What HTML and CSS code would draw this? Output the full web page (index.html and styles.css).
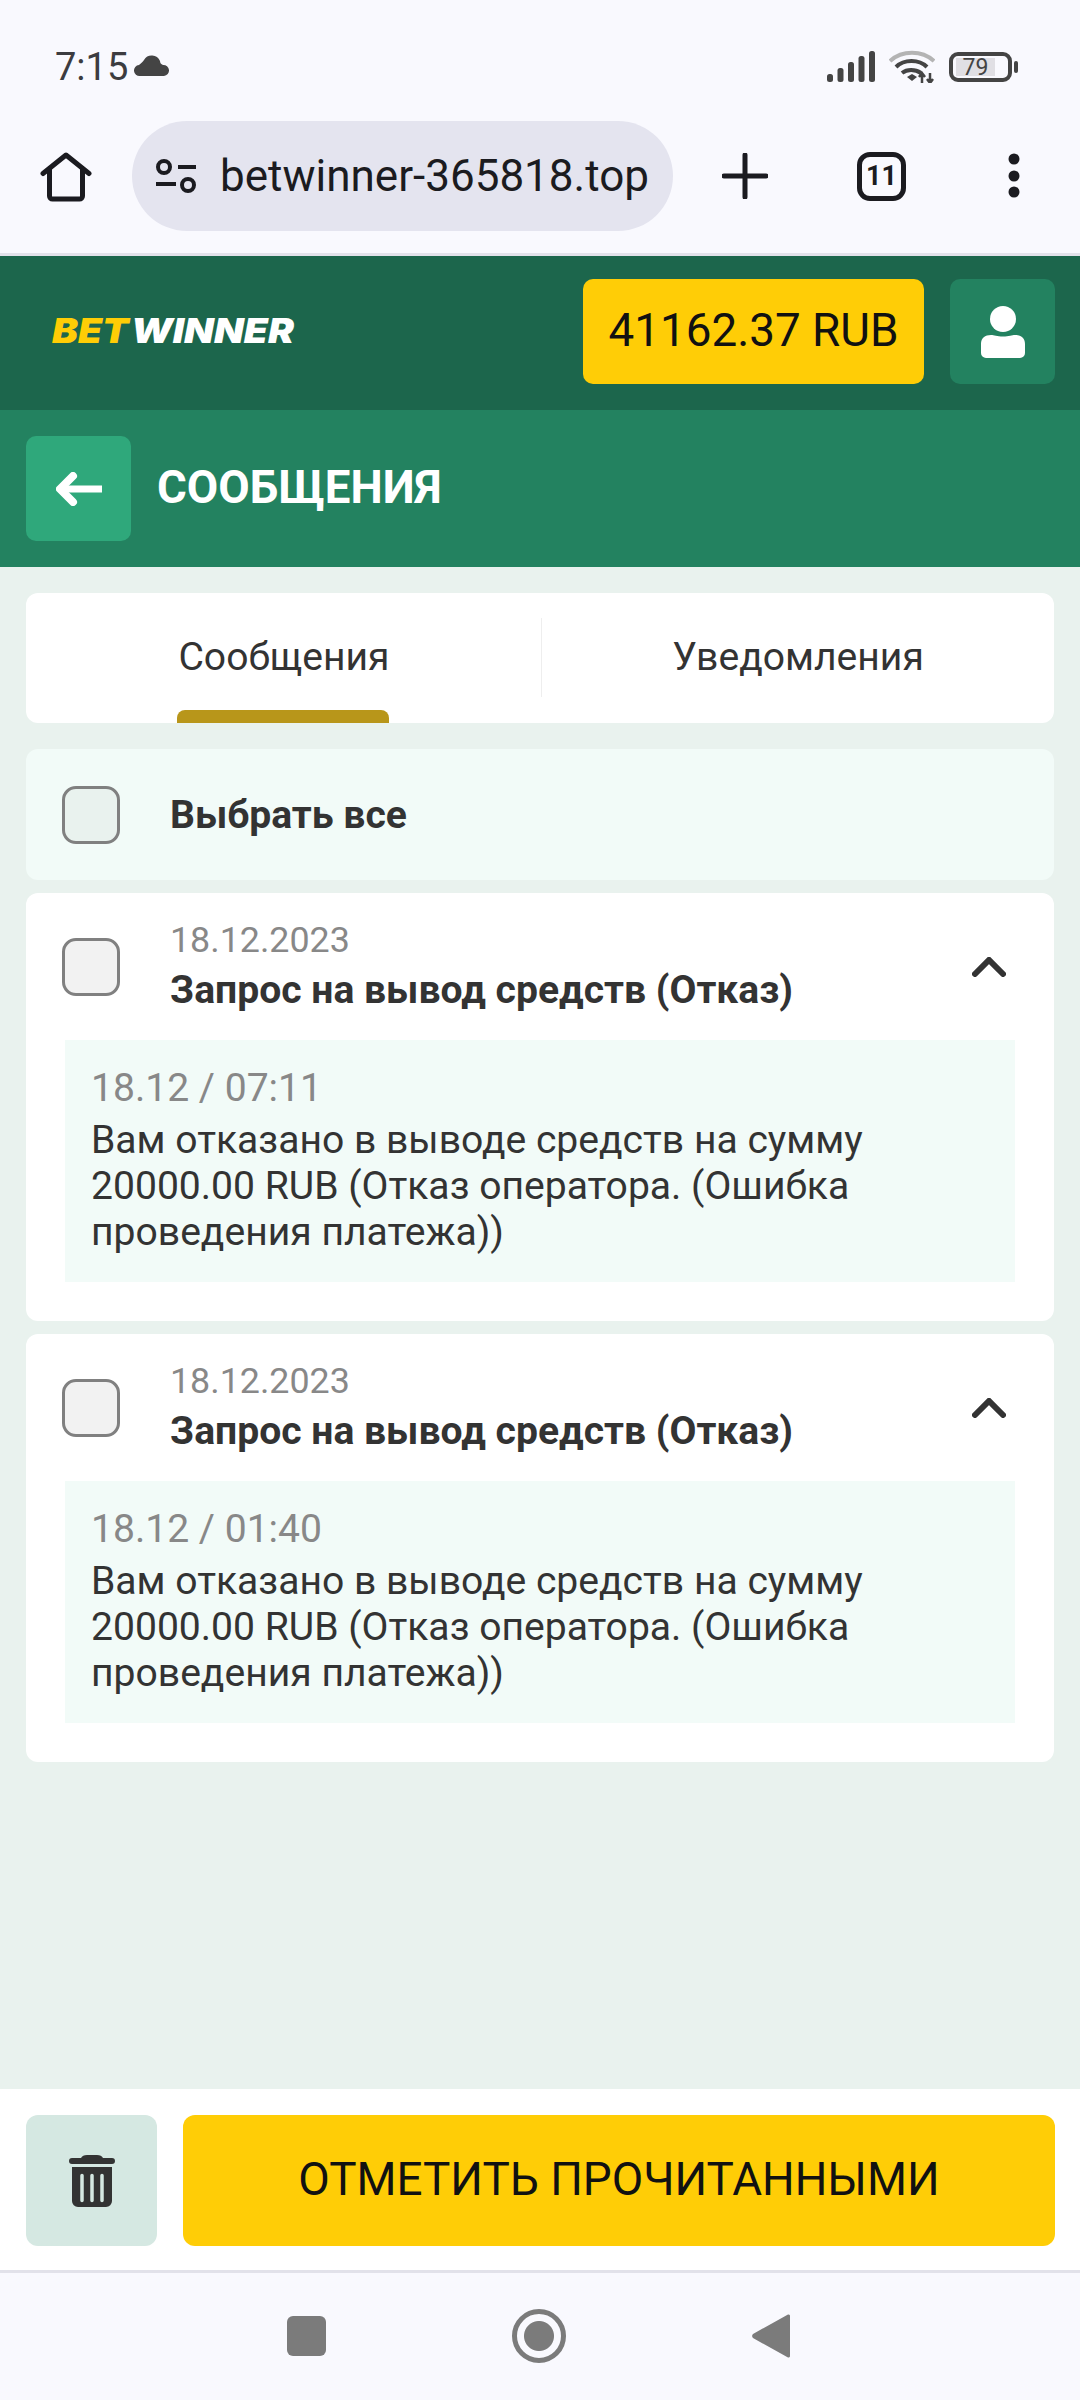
FILE: index.html
```html
<!DOCTYPE html>
<html lang="ru">
<head>
    <meta charset="UTF-8">
    <meta name="viewport" content="width=device-width, initial-scale=1.0">
    <title>Сообщения</title>
    <link rel="stylesheet" href="styles.css">
</head>
<body>
    <div class="page">
        <div class="status-bar">
            <div class="status-left">
                <span class="clock">7:15</span>
                <svg class="cloud" width="36" height="24" viewBox="0 0 36 24"><path fill="#444" d="M6 23a5.500 5.500 0 0 1-1-11C7 10 9 9 10 7a9 9 0 0 1 16 1c0 2 1 3 3 4a5.500 5.500 0 0 1 1 11z"/></svg>
            </div>
            <div class="status-right">
                <svg class="signal-icon" width="48" height="31" viewBox="0 0 48 31"><g fill="#444"><rect x="0" y="23" width="6" height="8" rx="2.500"/><rect x="10.500" y="17" width="6" height="14" rx="2.500"/><rect x="21" y="11" width="6" height="20" rx="2.500"/><rect x="31.500" y="5" width="6" height="26" rx="2.500"/><rect x="42" y="0" width="6" height="31" rx="2.500"/></g></svg>
                <svg class="wifi-icon" width="46" height="34" viewBox="0 0 46 34"><path d="M1 12C13 1 33 1 45 12" fill="none" stroke="#b4b4b4" stroke-width="4"/><path d="M7 18C15 10 30 10 38 18M13 24c5-4 13-4 19 0" fill="none" stroke="#444" stroke-width="4"/><path d="M18 28l5-3 5 3-5 4z" fill="#444"/><path d="M33 24v10M41 24v10M30 28l3-4 3 4M38 30l3 4 3-4" stroke="#444" stroke-width="2.500" fill="none"/></svg>
                <div class="battery"><span class="battery-level">79</span></div>
                <span class="battery-tip"></span>
            </div>
        </div>

        <div class="browser-bar">
            <svg class="home-icon" width="52" height="50" viewBox="0 0 52 50"><path d="M3 21.500L26 3l23 18.500M9.500 17v27a3 3 0 0 0 3 3h27a3 3 0 0 0 3-3V17" fill="none" stroke="#1b1b20" stroke-width="5" stroke-linecap="round" stroke-linejoin="round"/></svg>
            <div class="url-pill">
                <svg width="40" height="34" viewBox="0 0 40 34"><g fill="none" stroke="#1b1b20" stroke-width="4"><circle cx="8" cy="8" r="6"/><circle cx="32" cy="26" r="6"/><path d="M22 8h18M0 25h20"/></g></svg>
                <span class="url-text">betwinner-365818.top</span>
            </div>
            <svg class="plus-icon" width="46" height="46" viewBox="0 0 46 46"><path d="M23 2v42M2 23h42" stroke="#1b1b20" stroke-width="5" stroke-linecap="round"/></svg>
            <div class="tab-count">11</div>
            <svg class="dots-icon" width="14" height="46" viewBox="0 0 14 46"><g fill="#1b1b20"><circle cx="7" cy="6" r="5.500"/><circle cx="7" cy="23" r="5.500"/><circle cx="7" cy="39" r="5.500"/></g></svg>
        </div>

        <header class="site-header">
            <div class="logo"><span class="logo-bet">BET</span><span class="logo-winner">WINNER</span></div>
            <div class="balance">41162.37 RUB</div>
            <div class="profile-btn">
                <svg width="46" height="52" viewBox="0 0 46 52"><g fill="#fff"><circle cx="23" cy="13" r="13"/><path d="M1 47V38c0-6 4-9 10-9 3 0 6 1.500 12 1.500S32 29 35 29c6 0 10 3 10 9v9a5 5 0 0 1-5 5H6a5 5 0 0 1-5-5z"/></g></svg>
            </div>
        </header>

        <div class="title-bar">
            <div class="back-btn">
                <svg width="46" height="34" viewBox="0 0 46 34"><path d="M17 4L4 17l13 13" fill="none" stroke="#fff" stroke-width="8" stroke-linecap="round" stroke-linejoin="round"/><path d="M6 17h40" stroke="#fff" stroke-width="7"/></svg>
            </div>
            <h1 class="page-title">СООБЩЕНИЯ</h1>
        </div>

        <main class="content">
            <div class="tabs">
                <div class="tab tab-active">Сообщения<span class="tab-marker"></span></div>
                <div class="tab">Уведомления</div>
            </div>

            <div class="select-all">
                <span class="checkbox checkbox-tint"></span>
                <span class="select-label">Выбрать все</span>
            </div>

            <section class="message">
                <div class="message-head">
                    <span class="checkbox"></span>
                    <div class="message-titles">
                        <div class="message-date">18.12.2023</div>
                        <div class="message-subject">Запрос на вывод средств (Отказ)</div>
                    </div>
                    <svg class="chevron" width="34" height="20" viewBox="0 0 34 20"><path d="M3 17L17 3l14 14" fill="none" stroke="#333" stroke-width="6" stroke-linecap="round"/></svg>
                </div>
                <div class="message-body">
                    <div class="message-time">18.12 / 07:11</div>
                    <div class="message-text">Вам отказано в выводе средств на сумму 20000.00 RUB (Отказ оператора. (Ошибка проведения платежа))</div>
                </div>
            </section>

            <section class="message">
                <div class="message-head">
                    <span class="checkbox"></span>
                    <div class="message-titles">
                        <div class="message-date">18.12.2023</div>
                        <div class="message-subject">Запрос на вывод средств (Отказ)</div>
                    </div>
                    <svg class="chevron" width="34" height="20" viewBox="0 0 34 20"><path d="M3 17L17 3l14 14" fill="none" stroke="#333" stroke-width="6" stroke-linecap="round"/></svg>
                </div>
                <div class="message-body">
                    <div class="message-time">18.12 / 01:40</div>
                    <div class="message-text">Вам отказано в выводе средств на сумму 20000.00 RUB (Отказ оператора. (Ошибка проведения платежа))</div>
                </div>
            </section>
        </main>

        <div class="action-bar">
            <div class="trash-btn">
                <svg width="46" height="52" viewBox="0 0 46 52"><path fill="#333" d="M18 0h10c3 0 5 1 6 3h9a3 3 0 0 1 0 6H3a3 3 0 0 1 0-6h9c1-2 3-3 6-3zM3 12h40v34a6 6 0 0 1-6 6H9a6 6 0 0 1-6-6z"/><path d="M13 20.500v25M23 20.500v25M33 20.500v25" stroke="#d5e8e2" stroke-width="3.500" stroke-linecap="round"/></svg>
            </div>
            <div class="mark-read-btn">ОТМЕТИТЬ ПРОЧИТАННЫМИ</div>
        </div>

        <nav class="nav-bar">
            <span class="nav-square"></span>
            <span class="nav-circle"></span>
            <svg width="38" height="46" viewBox="0 0 38 46"><path fill="#7b7b7b" d="M36 1.500a1.500 1.500 0 0 1 2 1.500v40a1.500 1.500 0 0 1-2 1.500L1 25a3 3 0 0 1 0-4z"/></svg>
        </nav>
    </div>
</body>
</html>
```

FILE: styles.css
```css
* { box-sizing: border-box; }
body { margin: 0; font-family: Roboto, sans-serif; color: #333; }
.page { width: 1080px; height: 2400px; display: flex; flex-direction: column; background: #e9f2ee; overflow: hidden; }

/* phone + browser chrome */
.status-bar { height: 121px; flex: none; padding: 12px 62px 0 55px; display: flex; justify-content: space-between; align-items: center; background: #f9f9fe; }
.status-left { display: flex; align-items: center; gap: 6px; }
.clock { font-size: 38px; color: #3c3c40; }
.cloud { margin-top: -4px; }
.status-right { display: flex; align-items: center; gap: 14px; }
.wifi-icon { margin-top: -2px; }
.battery { width: 63px; height: 30px; border: 4px solid #444; border-radius: 9px; padding: 2px 3px; display: flex; }
.battery-level { width: 39px; height: 18px; background: #e0dfe4; font-size: 23px; line-height: 19px; text-align: center; color: #444; }
.battery-tip { width: 4px; height: 12px; background: #444; border-radius: 2px; margin-left: -12px; }

.browser-bar { height: 135px; flex: none; display: flex; align-items: flex-start; background: #f9f9fe; border-bottom: 3px solid #e2e2ea; }
.home-icon { margin: 31px 0 0 40px; flex: none; }
.url-pill { width: 541px; height: 110px; margin-left: 40px; flex: none; background: #e4e4ef; border-radius: 55px; display: flex; align-items: center; padding-left: 24px; gap: 24px; }
.url-text { font-size: 44px; color: #1b1b20; white-space: nowrap; }
.plus-icon { margin: 32px 0 0 49px; flex: none; }
.tab-count { width: 49px; height: 49px; margin: 31px 0 0 89px; flex: none; border: 5px solid #1b1b20; border-radius: 13px; font-size: 27px; font-weight: 700; line-height: 39px; text-align: center; color: #1b1b20; }
.dots-icon { margin: 32px 0 0 101px; flex: none; }

/* site header */
.site-header { height: 154px; flex: none; background: #1c664c; display: flex; align-items: center; padding: 0 25px 3px 52px; }
.logo { font-family: Inter, sans-serif; font-size: 34px; font-weight: 900; font-style: italic; margin: 0 auto 3px 0; transform: scaleX(1.14); transform-origin: left center; }
.logo-bet { color: #ffcd06; margin-right: 2px; }
.logo-winner { color: #fff; }
.balance { width: 341px; height: 105px; background: #ffcd06; border-radius: 10px; font-size: 45.800px; color: #111; display: flex; align-items: center; justify-content: center; padding-bottom: 3px; }
.profile-btn { width: 105px; height: 105px; margin-left: 26px; background: #238260; border-radius: 10px; display: flex; align-items: center; justify-content: center; }

.title-bar { height: 157px; flex: none; background: #238260; display: flex; align-items: center; padding: 0 26px; gap: 26px; }
.back-btn { width: 105px; height: 105px; background: #2fa87b; border-radius: 10px; display: flex; align-items: center; justify-content: center; }
.page-title { margin: 0 0 2px; font-size: 45.600px; font-weight: 700; color: #fff; }

/* messages */
.content { flex: 1; padding: 26px 26px 0; display: flex; flex-direction: column; }
.tabs { height: 130px; background: #fff; border-radius: 12px; display: flex; }
.tab { flex: 1; position: relative; display: flex; align-items: center; justify-content: center; font-size: 39.100px; padding-bottom: 2px; }
.tab-active { flex: none; width: 516px; }
.tab-active::after { content: ""; position: absolute; right: 0; top: 25px; bottom: 26px; width: 1px; background: #eee; }
.tab-marker { position: absolute; left: 151px; bottom: 0; width: 212px; height: 13px; background: #b8961a; border-radius: 8px 8px 0 0; }

.select-all { height: 131px; margin-top: 26px; background: #f2fbf8; border-radius: 12px; display: flex; align-items: center; padding-left: 36px; }
.select-label { margin-left: 50px; font-size: 39.100px; font-weight: 700; }
.checkbox { width: 58px; height: 58px; flex: none; background: #f2f2f2; border: 3px solid #808080; border-radius: 14px; }
.checkbox-tint { background: #e9f2ee; }

.message { height: 428px; margin-top: 13px; background: #fff; border-radius: 12px; padding: 0 39px; }
.message-head { height: 147px; display: flex; align-items: center; margin-left: -3px; }
.message-titles { margin-left: 50px; flex: 1; padding-bottom: 2px; }
.message-date { font-size: 35.800px; line-height: 46px; color: #888; }
.message-subject { margin-top: 2px; font-size: 39.100px; line-height: 50px; font-weight: 700; }
.chevron { margin-right: 9px; }
.message-body { height: 242px; background: #f2fbf8; padding: 25px 26px 0; }
.message-time { font-size: 39.100px; line-height: 46px; color: #888; }
.message-text { margin-top: 6px; font-size: 39.100px; line-height: 46px; }

/* bottom */
.action-bar { height: 184px; flex: none; background: #fff; border-bottom: 3px solid #e2e2ea; padding: 26px 25px 24px 26px; display: flex; gap: 26px; }
.trash-btn { width: 131px; background: #d5e8e2; border-radius: 12px; display: flex; align-items: center; justify-content: center; }
.mark-read-btn { flex: 1; background: #ffcd06; border-radius: 12px; font-size: 45.800px; color: #111; display: flex; align-items: center; justify-content: center; padding-bottom: 2px; }
.nav-bar { height: 127px; flex: none; background: #f9f9fe; display: flex; align-items: center; padding: 0 0 2px 287px; }
.nav-square { width: 39px; height: 40px; background: #7b7b7b; border-radius: 6px; }
.nav-circle { width: 54px; height: 54px; margin-left: 186px; border: 5px solid #7b7b7b; border-radius: 50%; background: radial-gradient(circle, #7b7b7b 14.500px, #f9f9fe 15.500px); }
.nav-bar svg { margin-left: 186px; }
```
